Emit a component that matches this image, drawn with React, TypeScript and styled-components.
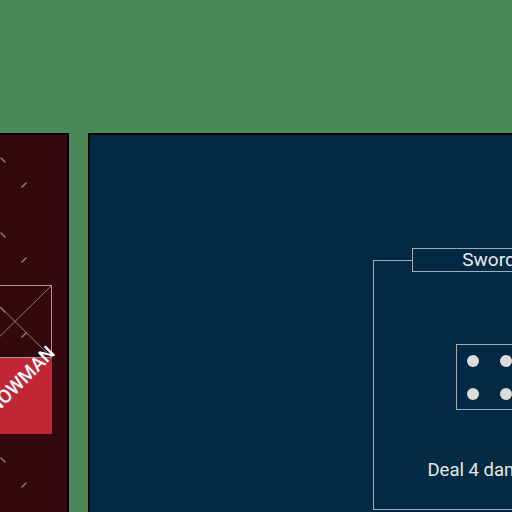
import React from "react";
import styled, { createGlobalStyle } from "styled-components";

const Global = createGlobalStyle`
  html, body {
    margin: 0;
    padding: 0;
    background: #4a8a58;
    overflow: hidden;
    font-family: Roboto, "Liberation Sans", Arial, sans-serif;
  }
`;

const Page = styled.div`
  width: 512px;
  height: 512px;
  overflow: hidden;
  background: #4a8a58;
`;

const Header = styled.div`
  height: 133px;
`;

const Board = styled.div`
  display: flex;
  gap: 19px;
  margin-left: -40px;
  width: max-content;
`;

const Hand = styled.section`
  position: relative;
  box-sizing: border-box;
  width: 109px;
  height: 600px;
  background: #33080e;
  border: 2px solid #000;
  display: flex;
  flex-direction: column;
  align-items: center;
  padding-top: 150px;
`;

const Stars = styled.svg`
  position: absolute;
  inset: 0;
  width: 100%;
  height: 100%;
  pointer-events: none;
`;

const MiniCard = styled.div`
  position: relative;
  width: 74px;
  display: flex;
  flex-direction: column;
`;

const Placeholder = styled.svg`
  display: block;
  width: 74px;
  height: 73px;
`;

const NamePlate = styled.div`
  position: relative;
  height: 76px;
  background: #c02636;
`;

const NameLabel = styled.span`
  position: absolute;
  left: 39px;
  top: 26px;
  transform: translate(-50%, -50%) rotate(-45deg);
  color: #ffffff;
  font-family: Roboto, "Liberation Sans", sans-serif;
  font-weight: 500;
  font-size: 19px;
  white-space: nowrap;
`;

const Arena = styled.section`
  box-sizing: border-box;
  width: 802px;
  height: 600px;
  background: #032a44;
  border: 2px solid #000;
  display: flex;
  justify-content: center;
  align-items: flex-start;
  padding-top: 113px;
`;

const Card = styled.fieldset`
  box-sizing: border-box;
  display: block;
  width: 232px;
  margin: 0;
  padding: 0;
  border: 1px solid #a3adb7;
  color: #e6e6e6;
`;

const Title = styled.legend`
  box-sizing: border-box;
  width: 155px;
  margin: 0 auto;
  padding: 0;
  border: 1px solid #a3adb7;
  text-align: center;
  font-size: 19px;
  line-height: 22px;
  color: #e8e8e8;
`;

const CardBody = styled.div`
  display: flex;
  flex-direction: column;
  align-items: center;
  padding: 72px 0 28px;
`;

const Die = styled.div`
  box-sizing: border-box;
  width: 66px;
  height: 66px;
  border: 1px solid #a3adb7;
  padding: 9.5px;
  display: grid;
  grid-template-columns: 12px 12px;
  grid-template-rows: 12px 12px;
  gap: 21.5px;
`;

const Pip = styled.span`
  width: 12px;
  height: 12px;
  border-radius: 50%;
  background: #dcdcdc;
`;

const Effect = styled.div`
  margin-top: 50px;
  font-size: 18.5px;
  line-height: 21px;
  color: #e6e6e6;
  white-space: nowrap;
`;

export default function App() {
  return (
    <Page>
      <Global />
      <Header />
      <Board>
        <Hand>
          <Stars>
            <defs>
              <pattern id="stars" width="75" height="75" patternUnits="userSpaceOnUse">
                <line x1="39" y1="23" x2="43" y2="27" stroke="#9a7c82" strokeWidth="1.4" strokeLinecap="round" />
                <line x1="60" y1="52" x2="64" y2="48" stroke="#9a7c82" strokeWidth="1.4" strokeLinecap="round" />
              </pattern>
            </defs>
            <rect width="100%" height="100%" fill="url(#stars)" />
          </Stars>
          <MiniCard>
            <Placeholder viewBox="0 0 74 73">
              <rect x="0.5" y="0.5" width="73" height="72" fill="none" stroke="#a8969a" strokeWidth="1" />
              <line x1="0.5" y1="0.5" x2="73.5" y2="72.5" stroke="#8f7a7e" strokeWidth="1" />
              <line x1="73.5" y1="0.5" x2="0.5" y2="72.5" stroke="#8f7a7e" strokeWidth="1" />
            </Placeholder>
            <NamePlate>
              <NameLabel>SNOWMAN</NameLabel>
            </NamePlate>
          </MiniCard>
        </Hand>
        <Arena>
          <Card>
            <Title>Sword</Title>
            <CardBody>
              <Die>
                <Pip />
                <Pip />
                <Pip />
                <Pip />
              </Die>
              <Effect>Deal 4 damage</Effect>
            </CardBody>
          </Card>
        </Arena>
      </Board>
    </Page>
  );
}
